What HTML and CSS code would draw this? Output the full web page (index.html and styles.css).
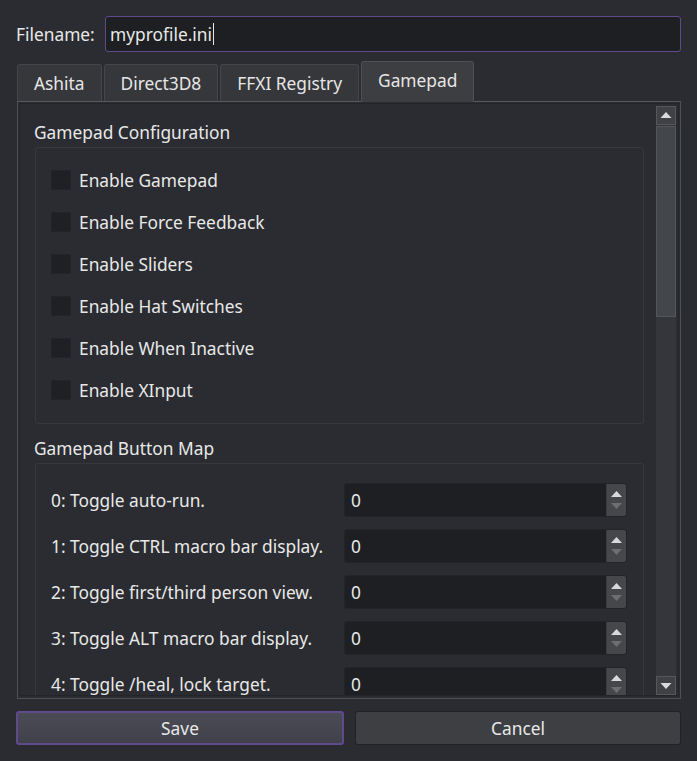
FILE: index.html
```html
<!DOCTYPE html>
<html>
<head>
<meta charset="utf-8">
<link rel="stylesheet" href="styles.css">
</head>
<body>
<div class="window">
  <div class="file-row">
    <label class="file-label">Filename:</label>
    <div class="file-input"><span class="file-text">myprofile.ini</span><span class="caret"></span></div>
  </div>

  <div class="tabs">
    <div class="tab">Ashita</div>
    <div class="tab">Direct3D8</div>
    <div class="tab">FFXI Registry</div>
    <div class="tab active">Gamepad</div>
  </div>

  <div class="pane">
    <div class="scroll-area">
      <div class="content">
        <div class="group-title">Gamepad Configuration</div>
        <div class="group">
          <div class="check-row"><span class="check"></span><span>Enable Gamepad</span></div>
          <div class="check-row"><span class="check"></span><span>Enable Force Feedback</span></div>
          <div class="check-row"><span class="check"></span><span>Enable Sliders</span></div>
          <div class="check-row"><span class="check"></span><span>Enable Hat Switches</span></div>
          <div class="check-row"><span class="check"></span><span>Enable When Inactive</span></div>
          <div class="check-row"><span class="check"></span><span>Enable XInput</span></div>
        </div>

        <div class="group-title second">Gamepad Button Map</div>
        <div class="group map">
          <div class="map-row">
            <span class="map-label">0: Toggle auto-run.</span>
            <div class="spin"><span class="spin-value">0</span><div class="spin-btns"><svg width="19" height="32" viewBox="0 0 19 32"><polygon points="4,13 9.5,7 15,13" fill="#d7d8da"/><polygon points="4,19 15,19 9.5,25" fill="#6c6e72"/></svg></div></div>
          </div>
          <div class="map-row">
            <span class="map-label">1: Toggle CTRL macro bar display.</span>
            <div class="spin"><span class="spin-value">0</span><div class="spin-btns"><svg width="19" height="32" viewBox="0 0 19 32"><polygon points="4,13 9.5,7 15,13" fill="#d7d8da"/><polygon points="4,19 15,19 9.5,25" fill="#6c6e72"/></svg></div></div>
          </div>
          <div class="map-row">
            <span class="map-label">2: Toggle first/third person view.</span>
            <div class="spin"><span class="spin-value">0</span><div class="spin-btns"><svg width="19" height="32" viewBox="0 0 19 32"><polygon points="4,13 9.5,7 15,13" fill="#d7d8da"/><polygon points="4,19 15,19 9.5,25" fill="#6c6e72"/></svg></div></div>
          </div>
          <div class="map-row">
            <span class="map-label">3: Toggle ALT macro bar display.</span>
            <div class="spin"><span class="spin-value">0</span><div class="spin-btns"><svg width="19" height="32" viewBox="0 0 19 32"><polygon points="4,13 9.5,7 15,13" fill="#d7d8da"/><polygon points="4,19 15,19 9.5,25" fill="#6c6e72"/></svg></div></div>
          </div>
          <div class="map-row">
            <span class="map-label">4: Toggle /heal, lock target.</span>
            <div class="spin"><span class="spin-value">0</span><div class="spin-btns"><svg width="19" height="32" viewBox="0 0 19 32"><polygon points="4,13 9.5,7 15,13" fill="#d7d8da"/><polygon points="4,19 15,19 9.5,25" fill="#6c6e72"/></svg></div></div>
          </div>
        </div>
      </div>

      <div class="scrollbar">
        <div class="sb-btn"><svg width="18" height="17" viewBox="0 0 18 17"><polygon points="3.5,11 9,5 14.5,11" fill="#d9dadc"/></svg></div>
        <div class="sb-handle"></div>
        <div class="sb-track"></div>
        <div class="sb-btn"><svg width="18" height="17" viewBox="0 0 18 17"><polygon points="3.5,6 14.5,6 9,12" fill="#d9dadc"/></svg></div>
      </div>
    </div>
  </div>

  <div class="actions">
    <div class="btn primary">Save</div>
    <div class="btn">Cancel</div>
  </div>
</div>
</body>
</html>
```

FILE: styles.css
```css
html, body {
  margin: 0;
  padding: 0;
  background: #2a2c31;
}

body {
  font-family: "Noto Sans", "Open Sans", sans-serif;
  font-size: 13pt;
  color: #e8e8e8;
}

.window {
  width: 697px;
  height: 761px;
  padding: 16px 16px 0 16px;
  box-sizing: border-box;
  display: flex;
  flex-direction: column;
}

.file-row {
  display: flex;
  align-items: center;
  height: 36px;
}

.file-label {
  width: 89px;
  line-height: 36px;
}

.file-input {
  flex: 1;
  height: 36px;
  box-sizing: border-box;
  background: #1d1f22;
  border: 1px solid #5e4a8c;
  border-radius: 3px;
  display: flex;
  align-items: center;
  padding-left: 4px;
  padding-bottom: 1px;
}

.caret {
  display: inline-block;
  width: 1px;
  height: 22px;
  background: #e8e8e8;
  margin-left: 1px;
}

.tabs {
  display: flex;
  align-items: flex-end;
  gap: 2px;
  margin-top: 9px;
  margin-left: 1px;
  height: 40px;
  position: relative;
  z-index: 1;
}

.tab {
  height: 37px;
  box-sizing: border-box;
  padding: 0 16px 1px 16px;
  display: flex;
  align-items: center;
  background: #35373b;
  border: 1px solid #44464a;
  border-bottom: none;
  border-radius: 3px 3px 0 0;
  color: #e6e6e6;
}

.tab.active {
  height: 41px;
  margin-bottom: -1px;
  background: #3c3e42;
  border-color: #4e5054;
  padding-bottom: 4px;
}

.pane {
  margin-left: 1px;
  width: 664px;
  height: 598px;
  box-sizing: border-box;
  border: 1px solid #4e5054;
  border-top-color: #56585c;
  padding: 1px 1px 2px 1px;
}

.scroll-area {
  height: 100%;
  box-sizing: border-box;
  border: 1px solid #232529;
  display: flex;
  padding: 2px 2px 0 0;
}

.content {
  flex: 1;
  overflow: hidden;
  padding: 14px 12px 0 15px;
}

.group-title {
  line-height: 24px;
  height: 24px;
  margin-left: -1px;
  margin-bottom: 3px;
}

.group-title.second {
  margin-top: 12px;
}

.group {
  border: 1px solid #36383d;
  border-radius: 3px;
  padding: 11px 15px 12px 15px;
}

.check-row {
  height: 42px;
  display: flex;
  align-items: center;
  gap: 8px;
}

.check-row span:last-child {
  margin-top: -1px;
}

.check {
  width: 20px;
  height: 20px;
  box-sizing: border-box;
  background: #1e2023;
  border: 1px solid #222427;
}

.group.map {
  padding: 13px 16px 0 15px;
}

.map-row {
  height: 46px;
  display: grid;
  grid-template-columns: 293px 1fr;
  align-items: center;
}

.spin {
  height: 34px;
  box-sizing: border-box;
  background: #1d1f22;
  border: 1px solid #222428;
  border-radius: 3px;
  display: flex;
  align-items: center;
  justify-content: space-between;
  overflow: hidden;
}

.spin-value {
  padding-left: 6px;
}

.spin-btns {
  width: 19px;
  height: 32px;
  background: #45474b;
  border-left: 1px solid #3a3c40;
  display: flex;
}

.scrollbar {
  width: 20px;
  display: flex;
  flex-direction: column;
  background: #32343a;
}

.sb-btn {
  height: 19px;
  box-sizing: border-box;
  background: #3f4145;
  border: 1px solid #55575b;
  display: flex;
  align-items: center;
  justify-content: center;
}

.sb-handle {
  height: 191px;
  margin-top: 1px;
  box-sizing: border-box;
  background: #43464a;
  border: 1px solid #54565a;
}

.sb-track {
  flex: 1;
  background: #34363b;
}

.actions {
  margin-top: 12px;
  display: grid;
  grid-template-columns: 328px 326px;
  gap: 11px;
}

.btn {
  height: 34px;
  box-sizing: border-box;
  display: flex;
  align-items: center;
  justify-content: center;
  padding-bottom: 1px;
  color: #e8e8e8;
  background: #3d3f43;
  border: 1px solid #1f2124;
  border-radius: 3px;
}

.btn.primary {
  background: linear-gradient(#4a4b55, #40414a);
  border: 2px solid #5e4a8c;
}
```
